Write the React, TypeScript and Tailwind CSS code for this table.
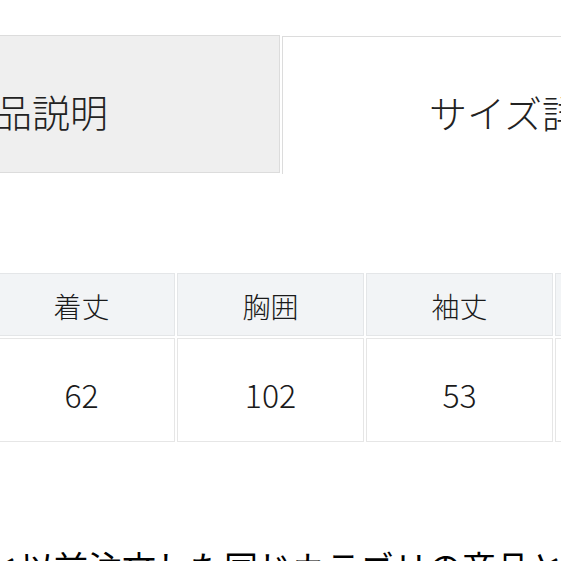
const font = { fontFamily: '"Noto Sans CJK JP", "Noto Sans", sans-serif' };

const heads = ["着丈", "胸囲", "袖丈", "肩幅"];
const values = ["62", "102", "53", "46"];

export default function App() {
  return (
    <div className="w-[561px] h-[561px] overflow-hidden bg-white font-light" style={font}>
      <div className="flex pt-[35px]">
        <div className="shrink-0 w-[496px] ml-[-216px] h-[138px] bg-[#efefef] border border-[#dcdcdc] flex items-center justify-center pt-[12px] text-[38px] text-[#222]">
          商品説明
        </div>
        <div className="shrink-0 w-[482px] ml-[2px] h-[138px] mt-[1px] bg-white border-t border-l border-[#dcdcdc] flex items-center justify-center pt-[12px] text-[38px] text-[#222]">
          サイズ詳細
        </div>
      </div>

      <table className="mt-[97px] ml-[-14px] border-separate border-spacing-[2px] text-[#1a1a1a]">
        <thead>
          <tr>
            {heads.map((h) => (
              <th
                key={h}
                className="w-[187px] min-w-[187px] h-[63px] bg-[#f2f4f6] border border-[#e4e6e8] font-light text-[28px] text-center pt-[2px]"
              >
                {h}
              </th>
            ))}
          </tr>
        </thead>
        <tbody>
          <tr>
            {values.map((v, i) => (
              <td
                key={i}
                className="h-[104px] bg-white border border-[#e6e6e6] text-[32px] text-center pt-[8px]"
              >
                {v}
              </td>
            ))}
          </tr>
        </tbody>
      </table>

      <p className="mt-[97px] ml-[-14px] whitespace-nowrap font-normal text-[34px] leading-[1.5] text-black">
        と以前注文した同じカテゴリの商品とサイズを比較してください
      </p>
    </div>
  );
}
